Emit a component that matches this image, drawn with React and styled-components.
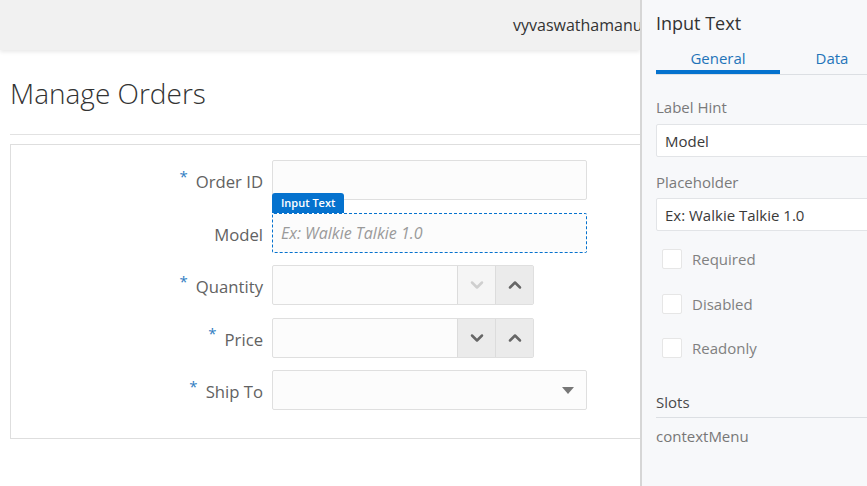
import React from "react";
import styled, { createGlobalStyle } from "styled-components";
import { ChevronDown, ChevronUp } from "lucide-react";

const GlobalStyle = createGlobalStyle`
  html, body {
    margin: 0;
    padding: 0;
    background: #fff;
  }
  body {
    font-family: "Open Sans", "Noto Sans", sans-serif;
    color: #333;
  }
`;

const Page = styled.div`
  display: flex;
  width: 867px;
  height: 486px;
  overflow: hidden;
`;

const Main = styled.div`
  width: 640px;
  flex-shrink: 0;
  overflow: hidden;
  background: #fff;
`;

const Header = styled.div`
  height: 50px;
  display: flex;
  align-items: center;
  padding-left: 513px;
  background: #f1f1f1;
  box-shadow: 0 2px 4px rgba(0, 0, 0, 0.09);
  font-size: 16px;
  color: #333;
  white-space: nowrap;
  position: relative;
`;

const Content = styled.div`
  padding: 0 0 0 10px;
`;

const Title = styled.h1`
  margin: 25px 0 0;
  font-size: 28px;
  line-height: 36px;
  font-weight: 300;
  color: #333;
`;

const Divider = styled.div`
  margin-top: 23px;
  border-top: 1px solid #e2e2e2;
`;

const FormCard = styled.div`
  width: 700px;
  margin-top: 9px;
  border: 1px solid #dedede;
  padding: 15px 0 28px;
  display: grid;
  grid-template-columns: 252px 315px;
  column-gap: 9px;
  row-gap: 12.5px;
  align-items: center;
`;

const Label = styled.label`
  display: flex;
  justify-content: flex-end;
  align-items: center;
  padding-top: 3px;
  font-size: 16.7px;
  color: #626262;
`;

const Star = styled.span`
  color: #2f7dc2;
  font-size: 15px;
  margin-right: 8px;
  position: relative;
  top: -6px;
`;

const Field = styled.div`
  position: relative;
  height: 40px;
  width: ${({ $width }) => $width || "315px"};
  box-sizing: border-box;
  display: flex;
  align-items: stretch;
  background: #fcfcfc;
  border: 1px ${({ $selected }) => ($selected ? "dashed #0572ce" : "solid #dfdfdf")};
  border-radius: 2px;
`;

const Placeholder = styled.span`
  align-self: center;
  padding-left: 8px;
  font-size: 16px;
  font-style: italic;
  color: #9a9a9a;
`;

const Tag = styled.div`
  position: absolute;
  left: -1px;
  bottom: 100%;
  margin-bottom: 1px;
  height: 20px;
  padding: 0 9px;
  display: flex;
  align-items: center;
  background: #0572ce;
  color: #fff;
  font-size: 11px;
  font-weight: 600;
  border-radius: 3px 3px 0 0;
`;

const Spacer = styled.div`
  flex: 1;
`;

const StepButton = styled.div`
  width: 37px;
  display: flex;
  align-items: center;
  justify-content: center;
  border-left: 1px solid #dcdcdc;
  background: ${({ $disabled }) => ($disabled ? "#f5f5f5" : "#ebebeb")};
  color: ${({ $disabled }) => ($disabled ? "#cfcfcf" : "#666")};
`;

const Caret = styled.div`
  align-self: center;
  margin-right: 12px;
  width: 0;
  height: 0;
  border-left: 6px solid transparent;
  border-right: 6px solid transparent;
  border-top: 7px solid #777;
`;

const Panel = styled.aside`
  width: 227px;
  flex-shrink: 0;
  box-sizing: border-box;
  border-left: 2px solid #d6d6d6;
  background: #f7f8fa;
  padding: 10px 0 0 14px;
  overflow: hidden;
  font-family: "Open Sans", "Noto Sans", sans-serif;
`;

const PanelInner = styled.div`
  width: 240px;
`;

const PanelTitle = styled.div`
  font-size: 18px;
  line-height: 26px;
  color: #333;
`;

const Tabs = styled.div`
  margin-top: 9px;
  display: flex;
  border-bottom: 1px solid #dcdfe3;
`;

const Tab = styled.div`
  width: ${({ $width }) => $width};
  text-align: center;
  font-size: 15px;
  line-height: 20px;
  padding: 3px 0 2px;
  color: #1f74b9;
  border-bottom: 4px solid ${({ $active }) => ($active ? "#0572ce" : "transparent")};
`;

const FieldLabel = styled.div`
  margin-top: ${({ $top }) => $top};
  font-size: 15px;
  line-height: 20px;
  color: #7a7a7a;
`;

const TextBox = styled.div`
  margin-top: ${({ $top }) => $top};
  height: 33px;
  box-sizing: border-box;
  display: flex;
  align-items: center;
  padding-left: 8px;
  background: #fff;
  border: 1px solid #e2e4e7;
  border-radius: 2px;
  font-size: 15px;
  color: #3a3a3a;
`;

const CheckList = styled.div`
  margin-top: 18px;
  padding-left: 6px;
  display: flex;
  flex-direction: column;
  gap: 24.5px;
`;

const CheckRow = styled.div`
  display: flex;
  align-items: center;
  gap: 10px;
  height: 20px;
  font-size: 15px;
  color: #808080;
`;

const Box = styled.div`
  width: 20px;
  height: 20px;
  box-sizing: border-box;
  background: #fff;
  border: 1px solid #e6e6e6;
  border-radius: 2px;
`;

const SectionHead = styled.div`
  margin-top: 34px;
  padding-bottom: 5px;
  border-bottom: 1px solid #dcdfe3;
  font-size: 15px;
  line-height: 20px;
  color: #4a4a4a;
`;

const SlotItem = styled.div`
  margin-top: 8px;
  font-size: 15px;
  line-height: 20px;
  color: #777;
`;

const RequiredLabel = ({ children, required }) => (
  <Label>
    {required && <Star>*</Star>}
    {children}
  </Label>
);

const App = () => {
  return (
    <>
      <GlobalStyle />
      <Page>
        <Main>
          <Header>vyvaswathamanukonda</Header>
          <Content>
            <Title>Manage Orders</Title>
            <Divider />
            <FormCard>
              <RequiredLabel required>Order ID</RequiredLabel>
              <Field />

              <RequiredLabel>Model</RequiredLabel>
              <Field $selected>
                <Tag>Input Text</Tag>
                <Placeholder>Ex: Walkie Talkie 1.0</Placeholder>
              </Field>

              <RequiredLabel required>Quantity</RequiredLabel>
              <Field $width="262px">
                <Spacer />
                <StepButton $disabled>
                  <ChevronDown size={20} strokeWidth={3} />
                </StepButton>
                <StepButton>
                  <ChevronUp size={20} strokeWidth={3} />
                </StepButton>
              </Field>

              <RequiredLabel required>Price</RequiredLabel>
              <Field $width="262px">
                <Spacer />
                <StepButton>
                  <ChevronDown size={20} strokeWidth={3} />
                </StepButton>
                <StepButton>
                  <ChevronUp size={20} strokeWidth={3} />
                </StepButton>
              </Field>

              <RequiredLabel required>Ship To</RequiredLabel>
              <Field>
                <Spacer />
                <Caret />
              </Field>
            </FormCard>
          </Content>
        </Main>

        <Panel>
          <PanelInner>
            <PanelTitle>Input Text</PanelTitle>
            <Tabs>
              <Tab $width="124px" $active>
                General
              </Tab>
              <Tab $width="104px">Data</Tab>
            </Tabs>

            <FieldLabel $top="22px">Label Hint</FieldLabel>
            <TextBox $top="7px">Model</TextBox>

            <FieldLabel $top="15px">Placeholder</FieldLabel>
            <TextBox $top="6px">Ex: Walkie Talkie 1.0</TextBox>

            <CheckList>
              <CheckRow>
                <Box />
                Required
              </CheckRow>
              <CheckRow>
                <Box />
                Disabled
              </CheckRow>
              <CheckRow>
                <Box />
                Readonly
              </CheckRow>
            </CheckList>

            <SectionHead>Slots</SectionHead>
            <SlotItem>contextMenu</SlotItem>
          </PanelInner>
        </Panel>
      </Page>
    </>
  );
};

export default App;
